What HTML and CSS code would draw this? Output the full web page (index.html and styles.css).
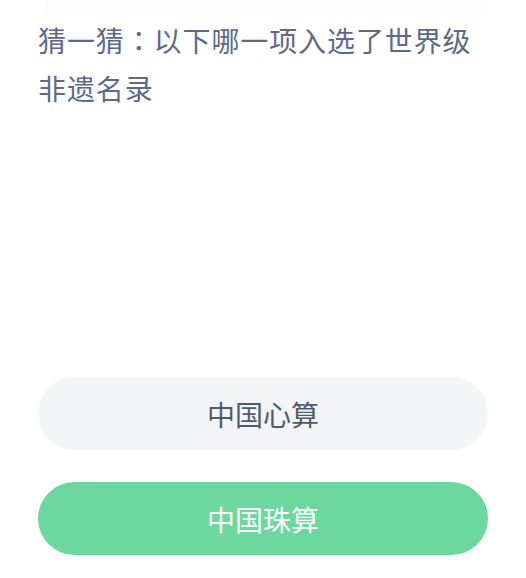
FILE: index.html
```html
<!DOCTYPE html>
<html lang="zh-CN">
<head>
    <meta charset="UTF-8">
    <meta name="viewport" content="width=device-width, initial-scale=1.0">
    <title>猜一猜</title>
    <link rel="stylesheet" href="styles.css">
</head>
<body>
    <div class="top-band"></div>
    <div class="quiz">
        <!-- 题目 -->
        <h1 class="question">猜一猜<span class="colon" lang="zh-TW">：</span>以下哪一项入选了世界级非遗名录</h1>

        <!-- 选项 -->
        <div class="options">
            <button class="option">中国心算</button>
            <button class="option correct">中国珠算</button>
        </div>
    </div>
</body>
</html>
```

FILE: styles.css
```css
body { font-family: "Noto Sans CJK SC", "Noto Sans", sans-serif; background: #fff; margin: 0; padding: 0; }
.top-band { height: 14px; margin: 0 36px 0 45px; background: #fdfdfd; }
.quiz { padding: 0 38px; }
.question { font-size: 28px; font-weight: 400; line-height: 48px; color: #5b6a8c; margin: 2px 0 0; letter-spacing: 0.9px; }
.colon { font-family: "Noto Sans CJK TC", sans-serif; }
.options { display: flex; flex-direction: column; gap: 32px; margin-top: 265px; }
.option { height: 73px; border: none; border-radius: 37px; background: #f4f5f7; color: #4f5b6e; font-family: inherit; font-size: 28px; cursor: pointer; }
.option.correct { background: #6cd89f; color: #fff; }
```
